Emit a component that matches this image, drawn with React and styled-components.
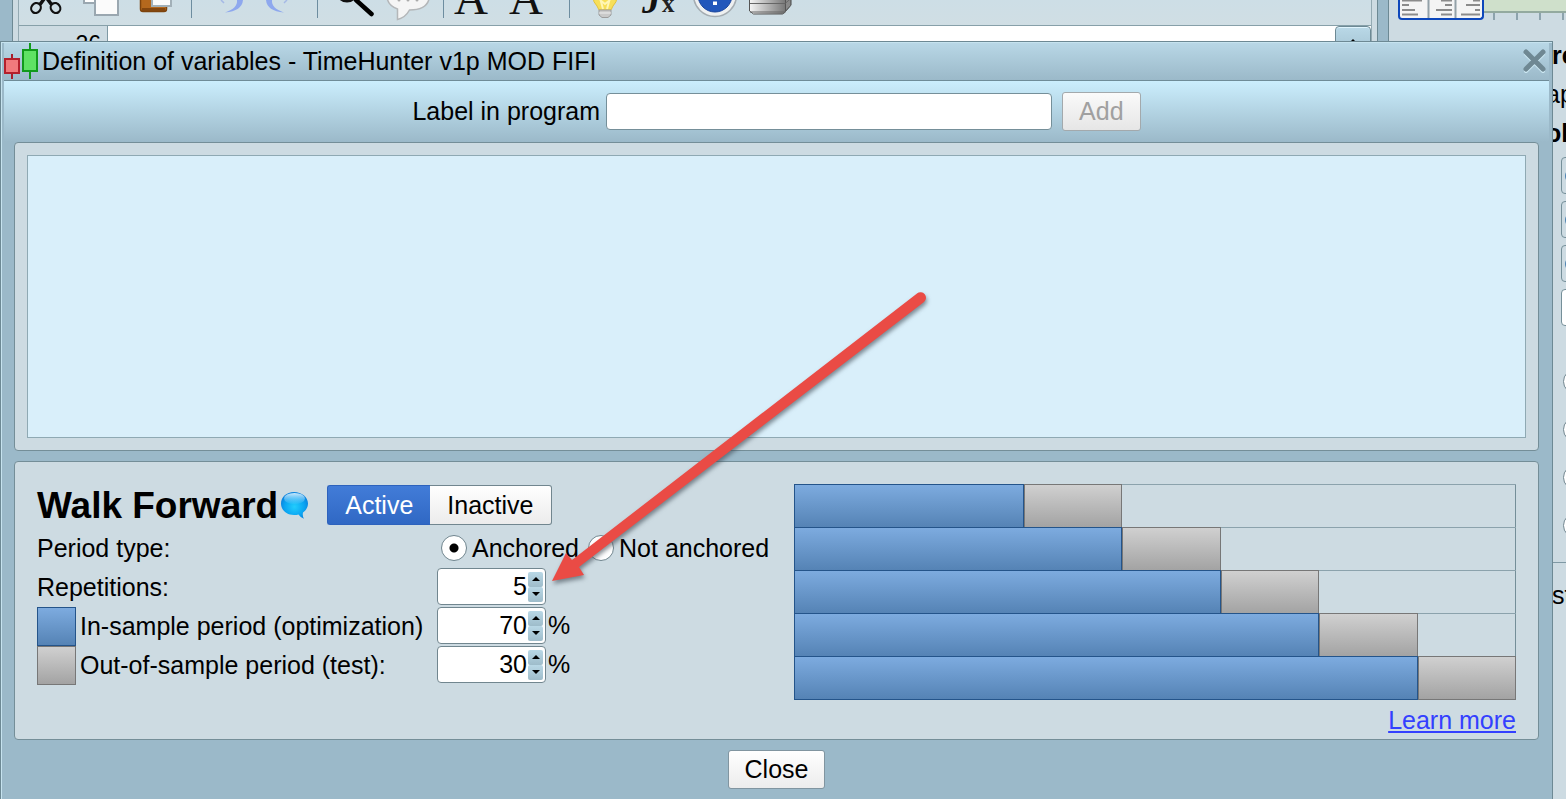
import React, { useState } from 'react';
import styled, { createGlobalStyle, css } from 'styled-components';

const GlobalStyle = createGlobalStyle`
  * {
    box-sizing: border-box;
  }

  body {
    margin: 0;
    overflow: hidden;
    background: #9bb9c9;
    color: #000;
    font-family: 'Liberation Sans', Arial, sans-serif;
    font-size: 25px;
    line-height: 39px;
  }

  button,
  input {
    font: inherit;
    color: inherit;
    margin: 0;
    padding: 0;
  }
`;

const Desktop = styled.div`
  position: relative;
  display: flex;
  height: 100vh;
  padding-left: 12px;
  gap: 10px;
  overflow: hidden;
`;

/* ---------- editor behind the dialog ---------- */

const Editor = styled.section`
  flex: 1;
  min-width: 0;
  display: flex;
  padding: 0 5px;
  border: solid #6d8994;
  border-width: 0 1px;
  background: #cddbe2;
`;

const EditorInner = styled.div`
  flex: 1;
  min-width: 0;
  display: flex;
  flex-direction: column;
  border: solid #94aab3;
  border-width: 0 1px;
`;

const Toolbar = styled.div`
  display: flex;
  height: 26px;
  overflow: hidden;
  border-bottom: 1px solid #87a0a9;
  background: linear-gradient(#cddee6, #d0dee4);
`;

const Tool = styled.button`
  width: 55px;
  height: 25px;
  border: 0;
  background: none;

  svg {
    display: block;
  }
`;

const Separator = styled.span`
  width: 1px;
  height: 18px;
  margin: 0 8px 0 7px;
  background: #6d8da0;
`;

const CodeArea = styled.div`
  flex: 1;
  display: flex;
  background: #fff;
`;

const LineNumbers = styled.div`
  width: 89px;
  padding: 4px 6px 0 0;
  border-right: 1px solid #7f99a4;
  background: #cddbe2;
  text-align: right;
  font-size: 23px;
  line-height: 28px;
`;

const Code = styled.div`
  flex: 1;
`;

const ScrollUp = styled.button`
  display: flex;
  justify-content: center;
  width: 36px;
  height: 36px;
  padding-top: 11px;
  border: 1px solid #6d8994;
  border-radius: 4px 4px 0 0;
  box-shadow: inset 0 1px #dff4fd;
  background: linear-gradient(#b9d8e7, #9ebdcc);
`;

const Sidebar = styled.aside`
  width: 178px;
  overflow: hidden;
  border-left: 1px solid #6d8994;
  background: #cddbe2;
`;

const Ruler = styled.div`
  display: flex;
  height: 36px;
  padding-left: 9px;
`;

const AlignTabs = styled.button`
  width: 86px;
  height: 20px;
  overflow: hidden;
  border: solid #0d47bb;
  border-width: 0 2px 2px;
  border-radius: 0 0 4px 4px;
  background: #f4f4f4;

  svg {
    display: block;
  }
`;

const Scale = styled.div`
  flex: 1;
  height: 13px;
  border-bottom: 2px solid #93aa9f;
  background: #cfe0cb;
`;

const Ticks = styled.div`
  display: flex;
  gap: 21px;
  padding: 13px 0 0 9px;

  i {
    width: 2px;
    height: 7px;
    background: #8da3ad;
  }
`;

const Options = styled.div`
  padding-left: 157px;
  white-space: nowrap;
`;

const OptionLabel = styled.div`
  padding-left: ${(p) => (p.$indent ? '6px' : '0')};
  font-weight: ${(p) => (p.$bold ? 'bold' : 'normal')};
`;

const OptionControls = styled.div`
  display: flex;
  flex-direction: column;
  gap: 7px;
  padding: 4px 0 0 15px;
`;

const optionBox = css`
  width: 60px;
  height: 37px;
  border: 1px solid #758f99;
  border-radius: 4px;
`;

const OptionButton = styled.button`
  ${optionBox}
  display: flex;
  align-items: center;
  padding-left: 3px;
  background: #cddbe2;

  &::before {
    content: '';
    width: 14px;
    height: 14px;
    border-radius: 50%;
    background: #4e82b0;
  }
`;

const OptionInput = styled.input`
  ${optionBox}
  background: #fff;
`;

const OptionRadios = styled.div`
  display: flex;
  flex-direction: column;
  gap: 23px;
  padding: 43px 0 24px 17px;
`;

const SidebarRule = styled.hr`
  margin: 0 0 13px;
  border: 0;
  border-top: 1px solid #7f99a4;
`;

/* ---------- dialog ---------- */

const Dialog = styled.main`
  position: absolute;
  top: 41px;
  left: 0;
  right: 13px;
  bottom: 0;
  display: flex;
  flex-direction: column;
  border: 1px solid #6d8994;
  border-bottom: 0;
  box-shadow: inset 1px 1px #c6e3ef;
  background: #9bb9c9;
`;

const TitleBar = styled.header`
  display: flex;
  align-items: center;
  height: 39px;
  margin: 0 3px;
  border-bottom: 1px solid #6f8c98;
  box-shadow: inset 0 1px #c6e3ef;
  background: linear-gradient(#b9d8e7, #9bb9c9);
`;

const Title = styled.h1`
  flex: 1;
  margin: 0 0 0 4px;
  font-size: 25px;
  font-weight: normal;
`;

const CloseIcon = styled.button`
  width: 26px;
  height: 26px;
  margin-right: 1px;
  border: 0;
  background: none;

  svg {
    display: block;
  }
`;

const LabelForm = styled.form`
  display: flex;
  align-items: center;
  justify-content: center;
  height: 61px;
  margin: 0 3px;
  background: linear-gradient(#cbeefd, #9bb9c9);

  input {
    width: 446px;
    height: 37px;
    margin: 0 10px 0 6px;
    padding: 0 6px;
    border: 1px solid #758f99;
    border-radius: 4px;
    background: #fff;
  }
`;

const Button = styled.button`
  height: 39px;
  padding: 0 16px;
  border: 1px solid #8195a0;
  border-radius: 3px;
  background: linear-gradient(#fff, #ececec);
  line-height: 37px;

  &:disabled {
    border-color: #a3a9ac;
    background: linear-gradient(#fafafa, #e6e6e6);
    color: #a0a0a0;
  }
`;

const Panel = styled.section`
  margin: 0 13px;
  border: 1px solid #748e98;
  border-radius: 4px;
  background: #cddbe2;
`;

const ListPanel = styled(Panel)`
  flex: 1;
  display: flex;
  margin-bottom: 10px;
  padding: 12px;
`;

const VariableList = styled.div`
  flex: 1;
  border: 1px solid #8fa9b3;
  background: #d9effa;
`;

const WalkPanel = styled(Panel)`
  display: flex;
  gap: 24px;
  height: 279px;
  padding: 22px;
`;

const Settings = styled.div`
  flex: 0 0 733px;
`;

const HeadingRow = styled.div`
  display: flex;
  align-items: center;
  height: 42px;
  margin-bottom: 3px;

  h2 {
    margin: 0;
    font-size: 37px;
    font-weight: bold;
  }

  svg {
    margin: 0 17px 0 2px;
  }
`;

const Toggle = styled.div`
  display: flex;
`;

const ToggleButton = styled.button`
  height: 40px;
  padding: 0 17px;
  border: 1px solid ${(p) => (p.$on ? '#2d62bd' : '#71868f')};
  border-width: ${(p) => (p.$on ? '1px 0 1px 1px' : '1px 1px 1px 0')};
  border-radius: ${(p) => (p.$on ? '3px 0 0 3px' : '0 3px 3px 0')};
  background: ${(p) => (p.$on ? 'linear-gradient(#427cd8, #3068c4)' : 'linear-gradient(#fff, #ececec)')};
  color: ${(p) => (p.$on ? '#fff' : '#000')};
  line-height: 38px;
`;

const Row = styled.div`
  display: grid;
  grid-template-columns: 400px auto;
  align-items: start;
  height: 39px;
`;

const RowLabel = styled.label`
  display: flex;
  gap: 4px;
  white-space: nowrap;
`;

const blueFill = css`
  border-color: #24548a;
  background: linear-gradient(#7dabdf, #5583b5);
`;

const grayFill = css`
  border-color: #777;
  background: linear-gradient(#d0d0d0, #a3a3a3);
`;

const Swatch = styled.span`
  width: 39px;
  height: 39px;
  border: 1px solid;
  ${(p) => (p.$test ? grayFill : blueFill)}
`;

const RadioGroup = styled.div`
  display: flex;
  gap: 9px;
  padding-left: 4px;

  label {
    display: flex;
    align-items: center;
    gap: 5px;
    height: 38px;
  }
`;

const Radio = styled.input`
  appearance: none;
  width: 26px;
  height: 26px;
  border: 1px solid #71868f;
  border-radius: 50%;
  background: #fff;

  &:checked {
    background: radial-gradient(circle, #000 4px, #fff 5px);
  }
`;

const OptionRadio = styled(Radio)`
  width: 25px;
  height: 25px;
`;

const NumberField = styled.div`
  display: flex;
  align-items: flex-start;
  gap: 2px;
  line-height: 37px;
`;

const SpinBox = styled.div`
  display: flex;
  align-items: center;
  gap: 1px;
  width: 109px;
  height: 37px;
  padding-right: 2px;
  border: 1px solid #71868f;
  border-radius: 4px;
  background: #fff;

  input {
    flex: 1;
    min-width: 0;
    height: 35px;
    border: 0;
    background: none;
    text-align: right;
    appearance: textfield;
  }

  input::-webkit-inner-spin-button {
    display: none;
  }
`;

const Arrows = styled.div`
  display: flex;
  flex-direction: column;
`;

const ArrowButton = styled.button`
  display: flex;
  align-items: center;
  justify-content: center;
  width: 15px;
  height: 15px;
  border: 0;
  border-radius: 2px;
  background: linear-gradient(#b9d8e6, #9ebcca);
`;

const ChartColumn = styled.div`
  flex: 1;
  min-width: 0;
  display: flex;
  flex-direction: column;
`;

const Chart = styled.div`
  border-bottom: 1px solid #24548a;
  border-right: 1px solid #748e98;
`;

const ChartRow = styled.div`
  display: flex;
  height: 43px;
  margin-right: -1px;
  border-top: 1px solid #8ba2ac;
`;

const Bar = styled.div`
  height: ${(p) => (p.$last ? '44px' : '43px')};
  margin-top: -1px;
  border: 1px solid;
  border-bottom-width: ${(p) => (p.$last ? '1px' : '0')};
  ${(p) => (p.$test ? grayFill : blueFill)}
`;

const LearnMore = styled.a`
  align-self: flex-end;
  margin-top: 1px;
  color: #3340ff;
  text-decoration: underline;
`;

const Footer = styled.footer`
  display: flex;
  justify-content: center;
  padding: 10px 0;
`;

const Pointer = styled.svg`
  position: absolute;
  top: 247px;
  left: 543px;
  pointer-events: none;
  filter: drop-shadow(1px 3px 2px rgba(60, 70, 80, 0.6));
`;

function ToolIcon({ x, label, children }) {
  return (
    <Tool type="button" aria-label={label}>
      <svg width="55" height="25" viewBox={`${x} 0 55 25`}>
        {children}
      </svg>
    </Tool>
  );
}

function EditorToolbar() {
  return (
    <Toolbar>
      <ToolIcon x={19} label="Cut">
        <g fill="none" stroke="#111" strokeWidth="2.2">
          <ellipse cx="36" cy="8" rx="4.6" ry="5.2" transform="rotate(35 36 8)" />
          <ellipse cx="55.5" cy="8" rx="4.6" ry="5.2" transform="rotate(-35 55.5 8)" />
          <path d="M40 4.500L47 -5M51.500 4.500L44.500 -5" strokeWidth="3.500" />
        </g>
      </ToolIcon>
      <ToolIcon x={74} label="Copy">
        <rect x="84" y="-8" width="24" height="11" fill="#fff" stroke="#9aa7b0" strokeWidth="2" />
        <rect x="95" y="-8" width="23" height="23" fill="#fbfbfb" stroke="#9aa7b0" strokeWidth="2" />
      </ToolIcon>
      <ToolIcon x={129} label="Paste">
        <rect x="140.500" y="-8" width="26" height="19.500" rx="2.500" fill="#b4681d" stroke="#7d430d" strokeWidth="1.500" />
        <path d="M142 9.500h23" stroke="#84470f" strokeWidth="3" />
        <rect x="152" y="-8" width="19" height="14" fill="#fbfbfb" stroke="#a2b0b8" strokeWidth="2" />
      </ToolIcon>
      <Separator />
      <ToolIcon x={200} label="Undo">
        <path d="M237 0q1 8-12 12.500q17-1.500 18-12.500z" fill="#8ea8ee" />
        <path d="M221 0l3 3" stroke="#a5b9e6" strokeWidth="1.500" />
      </ToolIcon>
      <ToolIcon x={255} label="Redo">
        <path d="M272 0q-1 8 12 12.500q-17-1.500-18-12.500z" fill="#8ea8ee" />
        <path d="M287 0l-3 3" stroke="#a5b9e6" strokeWidth="1.500" />
      </ToolIcon>
      <Separator />
      <ToolIcon x={326} label="Find">
        <circle cx="347" cy="-9" r="10" fill="none" stroke="#111" strokeWidth="3" />
        <path d="M356 0l15.500 14" stroke="#000" strokeWidth="4.500" strokeLinecap="round" />
      </ToolIcon>
      <ToolIcon x={381} label="Comment">
        <path
          d="M387-4q0 9 10.500 13v10.500q8-2 12-9.500q19 0 20-14"
          fill="#f5f5f5"
          stroke="#b4b7b9"
          strokeWidth="1.500"
        />
        <g fill="#aaa">
          <circle cx="399" cy="0" r="1.500" />
          <circle cx="408" cy="0" r="1.500" />
          <circle cx="417" cy="0" r="1.500" />
        </g>
      </ToolIcon>
      <Separator />
      <ToolIcon x={452} label="Larger text">
        <text x="454" y="14" fontFamily="Liberation Serif, serif" fontSize="47" fill="#111">A</text>
      </ToolIcon>
      <ToolIcon x={507} label="Smaller text">
        <text x="509" y="14" fontFamily="Liberation Serif, serif" fontSize="47" fill="#111">A</text>
      </ToolIcon>
      <Separator />
      <ToolIcon x={578} label="Hint">
        <path d="M593-3q0 5 4 9l2 4h12l2-4q4-4 4-9z" fill="#f7df58" stroke="#e3c23a" />
        <path d="M600-2l3 11M610-2l-3 11M600 0l5 4l5-4" fill="none" stroke="#fff6b5" strokeWidth="2" />
        <path d="M599 10h12v5l-3 2.500h-6l-3-2.500z" fill="#c9c9c9" stroke="#9c9c9c" />
        <path d="M599 13h12" stroke="#eee" />
      </ToolIcon>
      <ToolIcon x={633} label="Insert function">
        <text x="642" y="13" fontFamily="Liberation Serif, serif" fontSize="38" fontWeight="bold" fontStyle="italic" fill="#111">
          J
        </text>
        <text x="662" y="12" fontFamily="Liberation Serif, serif" fontSize="25" fontWeight="bold" fill="#222">x</text>
      </ToolIcon>
      <ToolIcon x={688} label="Help">
        <circle cx="715" cy="-5" r="21.500" fill="#eef0f1" stroke="#a5adb2" strokeWidth="1.500" />
        <circle cx="715" cy="-5" r="17" fill="#2257bb" stroke="#1b469c" />
        <path d="M715-6v6" stroke="#fff" strokeWidth="4" />
        <rect x="713" y="1.500" width="4" height="3.500" fill="#fff" />
      </ToolIcon>
      <ToolIcon x={743} label="Print">
        <defs>
          <linearGradient id="printer">
            <stop offset="0" stopColor="#f5f5f5" />
            <stop offset="1" stopColor="#777" />
          </linearGradient>
        </defs>
        <path d="M785-3l6 0v8l-6 7z" fill="#888" stroke="#444" />
        <path d="M749.500-3h36v15l-3 2h-29l-4-3z" fill="url(#printer)" stroke="#555" />
        <path d="M750 3.500h35l6-5M750 12h35l6-7" fill="none" stroke="#666" />
      </ToolIcon>
    </Toolbar>
  );
}

function OptionsSidebar() {
  return (
    <Sidebar>
      <Ruler>
        <AlignTabs type="button" aria-label="Alignment">
          <svg width="82" height="18" viewBox="0 0 82 18">
            <path d="M28.500 0v18M55.500 0v18" stroke="#93a1a8" strokeWidth="2" />
            <path
              d="M2 .500h20M2 5h7M2 10h13M2 14.500h16M41 .500h11M45 5h7M36 10h16M41 14.500h11M73 .500h7M66 5h14M75 10h5M61 14.500h19"
              stroke="#8b8b8b"
              strokeWidth="2"
            />
          </svg>
        </AlignTabs>
        <Scale>
          <Ticks>
            <i />
            <i />
            <i />
            <i />
          </Ticks>
        </Scale>
      </Ruler>
      <Options>
        <OptionLabel $bold $indent>re</OptionLabel>
        <OptionLabel>ap</OptionLabel>
        <OptionLabel $bold>ol</OptionLabel>
        <OptionControls>
          <OptionButton type="button" aria-label="First color" />
          <OptionButton type="button" aria-label="Second color" />
          <OptionButton type="button" aria-label="Third color" />
          <OptionInput aria-label="Value" />
        </OptionControls>
        <OptionRadios>
          {[1, 2, 3, 4].map((n) => (
            <OptionRadio key={n} type="radio" name="display" aria-label={`Display ${n}`} />
          ))}
        </OptionRadios>
      </Options>
      <SidebarRule />
      <Options>
        <OptionLabel $indent>st</OptionLabel>
      </Options>
    </Sidebar>
  );
}

function Spinner({ id, value, onChange, unit }) {
  return (
    <NumberField>
      <SpinBox>
        <input id={id} type="number" value={value} onChange={(e) => onChange(Number(e.target.value))} />
        <Arrows>
          <ArrowButton type="button" aria-label="Increase" onClick={() => onChange(value + 1)}>
            <svg width="8" height="4" viewBox="0 0 8 4">
              <path d="M0 4L4 0L8 4z" />
            </svg>
          </ArrowButton>
          <ArrowButton type="button" aria-label="Decrease" onClick={() => onChange(value - 1)}>
            <svg width="8" height="4" viewBox="0 0 8 4">
              <path d="M0 0L4 4L8 0z" />
            </svg>
          </ArrowButton>
        </Arrows>
      </SpinBox>
      {unit}
    </NumberField>
  );
}

function WalkChart({ repetitions, inSample }) {
  const test = 100 - inSample;
  const total = inSample + test * repetitions;

  return (
    <Chart>
      {Array.from({ length: repetitions }, (_, i) => {
        const last = i === repetitions - 1;
        return (
          <ChartRow key={i}>
            <Bar $last={last} style={{ width: `${((inSample + test * i) / total) * 100}%` }} />
            <Bar $last={last} $test style={{ width: `${(test / total) * 100}%` }} />
          </ChartRow>
        );
      })}
    </Chart>
  );
}

function App() {
  const [active, setActive] = useState(true);
  const [anchored, setAnchored] = useState(true);
  const [label, setLabel] = useState('');
  const [repetitions, setRepetitions] = useState(5);
  const [inSample, setInSample] = useState(70);

  return (
    <>
      <GlobalStyle />
      <Desktop>
        <Editor>
          <EditorInner>
            <EditorToolbar />
            <CodeArea>
              <LineNumbers>26</LineNumbers>
              <Code />
              <ScrollUp type="button" aria-label="Scroll up">
                <svg width="10" height="6" viewBox="0 0 10 6">
                  <path d="M0 6L5 1L10 6z" />
                </svg>
              </ScrollUp>
            </CodeArea>
          </EditorInner>
        </Editor>
        <OptionsSidebar />

        <Dialog>
          <TitleBar>
            <svg width="34" height="38" viewBox="0 0 34 38">
              <path d="M8 12v25" stroke="#a91d2b" strokeWidth="2" />
              <rect x="1" y="17" width="14" height="14" fill="#f07a7c" stroke="#b3202c" strokeWidth="2" />
              <path d="M26 1v36" stroke="#119a1b" strokeWidth="2" />
              <rect x="19" y="8" width="14" height="21" fill="#5fe264" stroke="#119a1b" strokeWidth="2" />
            </svg>
            <Title>Definition of variables - TimeHunter v1p MOD FIFI</Title>
            <CloseIcon type="button" aria-label="Close dialog">
              <svg width="26" height="26" viewBox="0 0 26 26" fill="none" strokeLinecap="round">
                <path d="M4 6l17 17M21 6L4 23" stroke="#cde8f3" strokeWidth="4" />
                <path d="M4 4l17 17M21 4L4 21" stroke="#6f8893" strokeWidth="5" />
              </svg>
            </CloseIcon>
          </TitleBar>

          <LabelForm onSubmit={(e) => e.preventDefault()}>
            <label htmlFor="variable-label">Label in program</label>
            <input id="variable-label" value={label} onChange={(e) => setLabel(e.target.value)} />
            <Button disabled={!label}>Add</Button>
          </LabelForm>

          <ListPanel>
            <VariableList />
          </ListPanel>

          <WalkPanel>
            <Settings>
              <HeadingRow>
                <h2>Walk Forward</h2>
                <svg width="30" height="30" viewBox="0 0 30 30">
                  <defs>
                    <radialGradient id="bubble" cx="0.5" cy="0.55" r="0.6">
                      <stop offset="0" stopColor="#22cdfd" />
                      <stop offset="0.6" stopColor="#0aa5f2" />
                      <stop offset="1" stopColor="#0a78d8" />
                    </radialGradient>
                    <linearGradient id="gloss" x1="0" y1="0" x2="0" y2="1">
                      <stop offset="0" stopColor="#e3f5ff" stopOpacity="0.9" />
                      <stop offset="1" stopColor="#8ad4fb" stopOpacity="0.1" />
                    </linearGradient>
                  </defs>
                  <path
                    d="M14 2C6.500 2 1 7 1 13.500S6.500 25 14 25q2.500 0 4.500-.6q2 3.200 5.500 4.300q-1.800-3-1-6.200c3-2.200 5-5.200 5-9C28 7 21.500 2 14 2z"
                    fill="url(#bubble)"
                  />
                  <ellipse cx="14.500" cy="8.500" rx="10.500" ry="5.500" fill="url(#gloss)" />
                </svg>
                <Toggle>
                  <ToggleButton type="button" $on={active} onClick={() => setActive(true)}>
                    Active
                  </ToggleButton>
                  <ToggleButton type="button" $on={!active} onClick={() => setActive(false)}>
                    Inactive
                  </ToggleButton>
                </Toggle>
              </HeadingRow>

              <Row>
                <span>Period type:</span>
                <RadioGroup>
                  <label>
                    <Radio type="radio" name="period" checked={anchored} onChange={() => setAnchored(true)} />
                    Anchored
                  </label>
                  <label>
                    <Radio type="radio" name="period" checked={!anchored} onChange={() => setAnchored(false)} />
                    Not anchored
                  </label>
                </RadioGroup>
              </Row>
              <Row>
                <RowLabel htmlFor="repetitions">Repetitions:</RowLabel>
                <Spinner id="repetitions" value={repetitions} onChange={setRepetitions} />
              </Row>
              <Row>
                <RowLabel htmlFor="in-sample">
                  <Swatch />
                  In-sample period (optimization)
                </RowLabel>
                <Spinner id="in-sample" value={inSample} onChange={setInSample} unit="%" />
              </Row>
              <Row>
                <RowLabel htmlFor="out-of-sample">
                  <Swatch $test />
                  Out-of-sample period (test):
                </RowLabel>
                <Spinner id="out-of-sample" value={100 - inSample} onChange={(v) => setInSample(100 - v)} unit="%" />
              </Row>
            </Settings>

            <ChartColumn>
              <WalkChart repetitions={repetitions} inSample={inSample} />
              <LearnMore href="#learn-more">Learn more</LearnMore>
            </ChartColumn>
          </WalkPanel>

          <Footer>
            <Button type="button">Close</Button>
          </Footer>

          <Pointer width="390" height="310" viewBox="0 0 390 310" aria-hidden="true">
            <path
              d="M8 292L22 264L28 271L373 4.500A5.500 5.500 0 0 1 380 13L35 278L40 286z"
              fill="#ea4b45"
            />
          </Pointer>
        </Dialog>
      </Desktop>
    </>
  );
}

export default App;
